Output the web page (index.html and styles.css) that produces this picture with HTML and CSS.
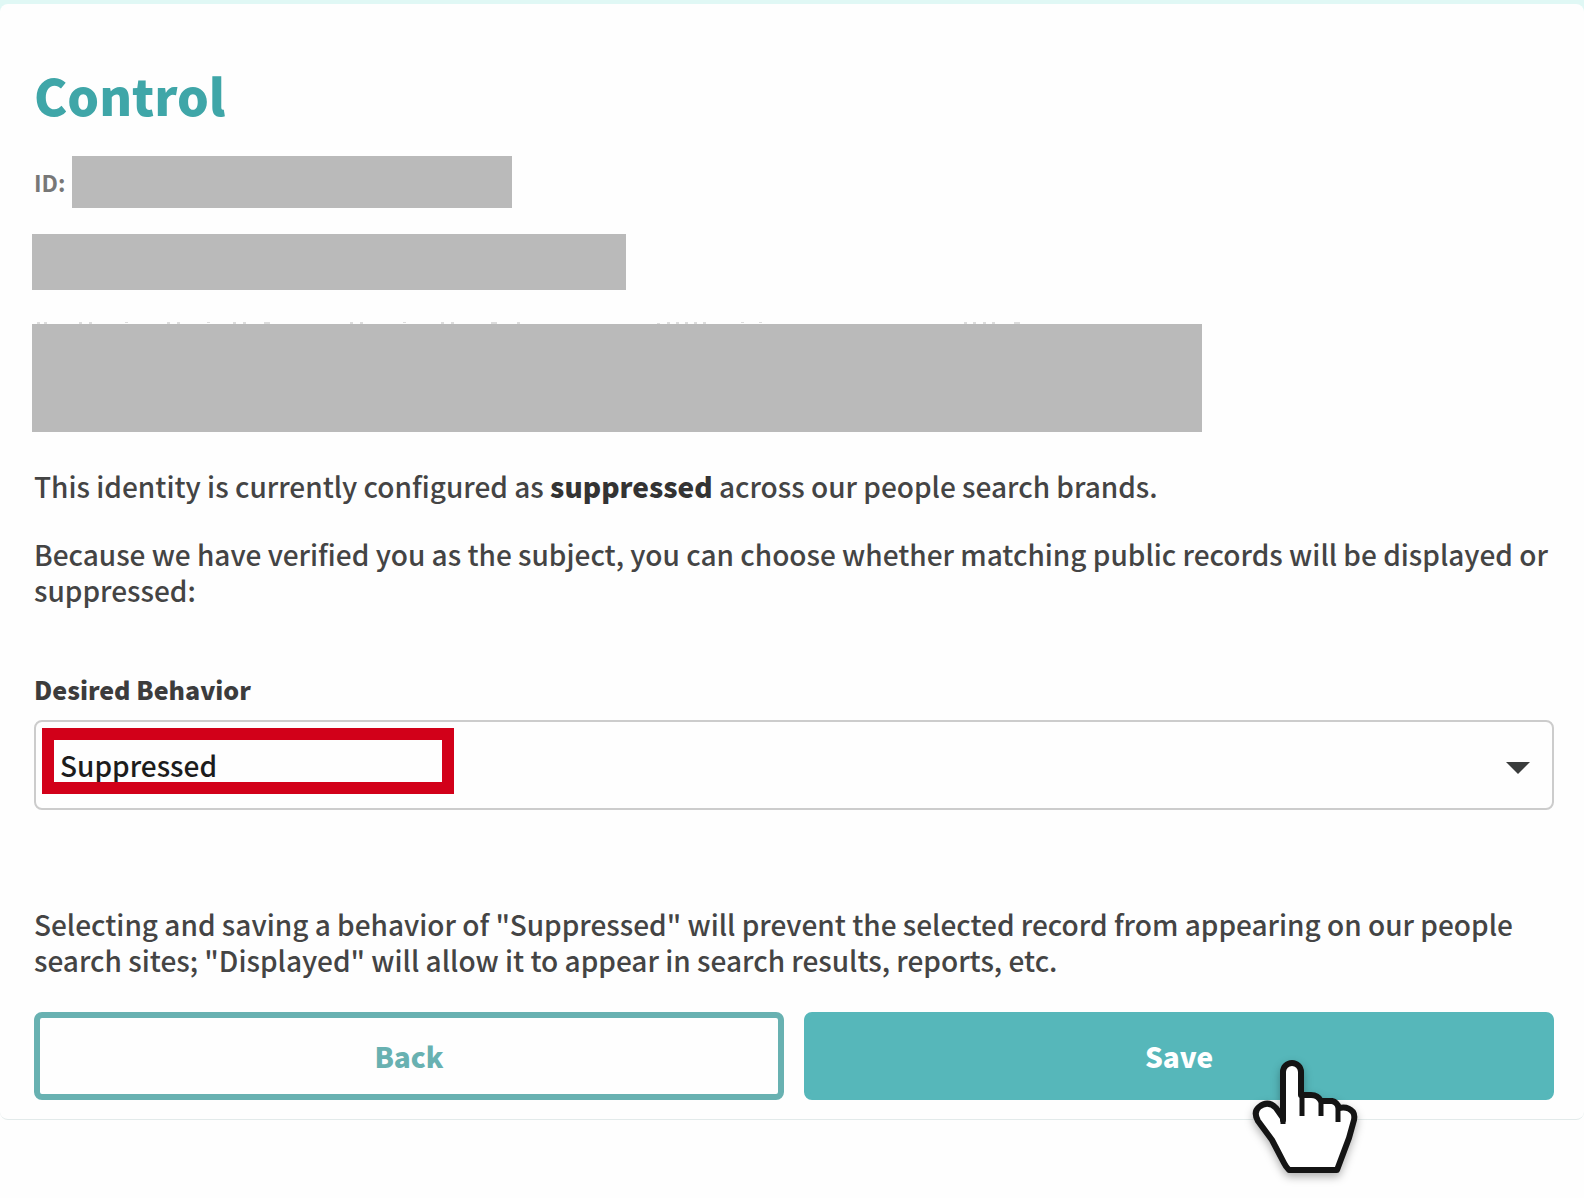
FILE: index.html
```html
<!DOCTYPE html>
<html lang="en">
<head>
<meta charset="utf-8">
<meta name="viewport" content="width=device-width, initial-scale=1">
<title>Control</title>
<link rel="stylesheet" href="styles.css">
</head>
<body>
<main class="card">
  <h1 class="title">Control</h1>
  <div class="id-row">
    <span class="id-label">ID:</span>
    <span class="redacted redacted-id"></span>
  </div>
  <div class="redacted redacted-name"></div>
  <div class="redacted redacted-details">
    <svg class="specks" width="1100" height="2" viewBox="0 0 1100 2" aria-hidden="true">
      <path d="M5 1h3m4 0h3m32 0h3m7 0h3m33-1h3m39 1h3m7 0h3m27-1h3m23 1h3m7 0h3m18 0h6m80 0h3m7 0h3m40-1h3m35 1h3m7 0h3m37 0h6m20 0h3m137 1h3m7-1h3m6 0h3m6 0h3m6 0h3m6 0h3m35-1h3m15 0h3m202 1h3m6 0h3m7 0h3m6 0h3m19 0h6" stroke="#bbb" stroke-width="2" opacity=".5"/>
    </svg>
  </div>
  <p class="text">This identity is currently configured as <strong>suppressed</strong> across our people search brands.</p>
  <p class="text">Because we have verified you as the subject, you can choose whether matching public records will be displayed or suppressed:</p>
  <form class="form">
    <label class="label" for="behavior">Desired Behavior</label>
    <div class="select-wrap">
      <select class="select" id="behavior">
        <option selected>Suppressed</option>
        <option>Displayed</option>
      </select>
      <svg class="arrow" width="24" height="12" viewBox="0 0 24 12" aria-hidden="true"><path d="M0 0h24L12 12z" fill="#3a3c3c"/></svg>
      <span class="highlight"></span>
    </div>
    <p class="text">Selecting and saving a behavior of "Suppressed" will prevent the selected record from appearing on our people search sites; "Displayed" will allow it to appear in search results, reports, etc.</p>
    <div class="actions">
      <button class="button button-outline" type="button">Back</button>
      <button class="button button-solid" type="submit">Save</button>
      <svg class="pointer" width="112" height="132" viewBox="20 56 112 132" aria-hidden="true">
        <path d="M53 120V72A9 9 0 0 1 71 72V95H81Q88 95 91 101H102Q107 102 109 108Q118 106 123 112Q125 115 124 120L119 138L107 170H59Q56 167 54 163L42 140L28 121Q23 112 29 107Q38 100 46 108L53 118Z" fill="#fff" stroke="#141414" stroke-width="6" stroke-linejoin="round"/>
        <path d="M53 104V124M72 92V116M91 100V116M108 106V122" fill="none" stroke="#141414" stroke-width="5"/>
      </svg>
    </div>
  </form>
</main>
</body>
</html>
```
FILE: styles.css
```css
* {
  box-sizing: border-box;
}

body {
  min-height: 100vh;
  margin: 0;
  padding-top: 4px;
  background: #fefefe linear-gradient(#e0f8f5, #e0f8f5) top / 100% 16px no-repeat;
  color: #444;
  font-family: "Noto Sans CJK SC", "Noto Sans", sans-serif;
  font-size: 28px;
  font-weight: 500;
  line-height: 36px;
}

.card {
  padding: 60px 30px 19px 34px;
  background: #fefefe;
  border-bottom: 1px solid #e2eaea;
  border-radius: 8px;
}

.title {
  margin: 0 0 32px;
  color: #3fa6a8;
  font-size: 50px;
  font-weight: 900;
  line-height: 60px;
}

.id-row {
  display: flex;
  align-items: center;
  gap: 8px;
  margin-bottom: 26px;
}

.id-label {
  width: 30px;
  color: #777;
  font-size: 23px;
  font-weight: 700;
}

.redacted {
  max-width: 100%;
  background: #bababa;
}

.redacted-id {
  width: 440px;
  height: 52px;
}

.redacted-name {
  width: 594px;
  height: 56px;
  margin: 0 0 34px -2px;
}

.redacted-details {
  position: relative;
  width: 1170px;
  height: 108px;
  margin: 0 0 36px -2px;
}

.specks {
  position: absolute;
  bottom: 100%;
  left: 0;
}

.text {
  margin: 0 0 32px;
}

.text strong {
  color: #333;
  font-weight: 900;
}

.form {
  padding-top: 31px;
}

.form .text {
  margin-bottom: 34px;
}

.label {
  display: block;
  margin-bottom: 13px;
  color: #3c3c3c;
  font-size: 25px;
  font-weight: 900;
}

.select-wrap {
  position: relative;
  margin-bottom: 96px;
}

.select {
  display: block;
  width: 100%;
  height: 90px;
  padding: 0 60px 0 24px;
  appearance: none;
  background: #fefefe;
  border: 2px solid #ccc;
  border-radius: 8px;
  color: #1c1c1c;
  font: inherit;
}

.arrow {
  position: absolute;
  top: 42px;
  right: 24px;
  pointer-events: none;
}

.highlight {
  position: absolute;
  top: 8px;
  left: 8px;
  width: 412px;
  height: 66px;
  border: 12px solid #d20019;
  pointer-events: none;
}

.actions {
  position: relative;
  display: grid;
  grid-template-columns: 1fr 1fr;
  gap: 20px;
}

.button {
  height: 88px;
  padding: 0;
  border: 6px solid #68b1b1;
  border-radius: 8px;
  font: inherit;
  font-weight: 900;
}

.button-outline {
  background: #fefefe;
  color: #68b1b1;
}

.button-solid {
  background: #56b7ba;
  border-color: #56b7ba;
  color: #fff;
}

.pointer {
  position: absolute;
  top: 44px;
  right: 192px;
  overflow: visible;
  filter: drop-shadow(0 4px 4px rgba(0, 0, 0, 0.3));
  pointer-events: none;
}
```
